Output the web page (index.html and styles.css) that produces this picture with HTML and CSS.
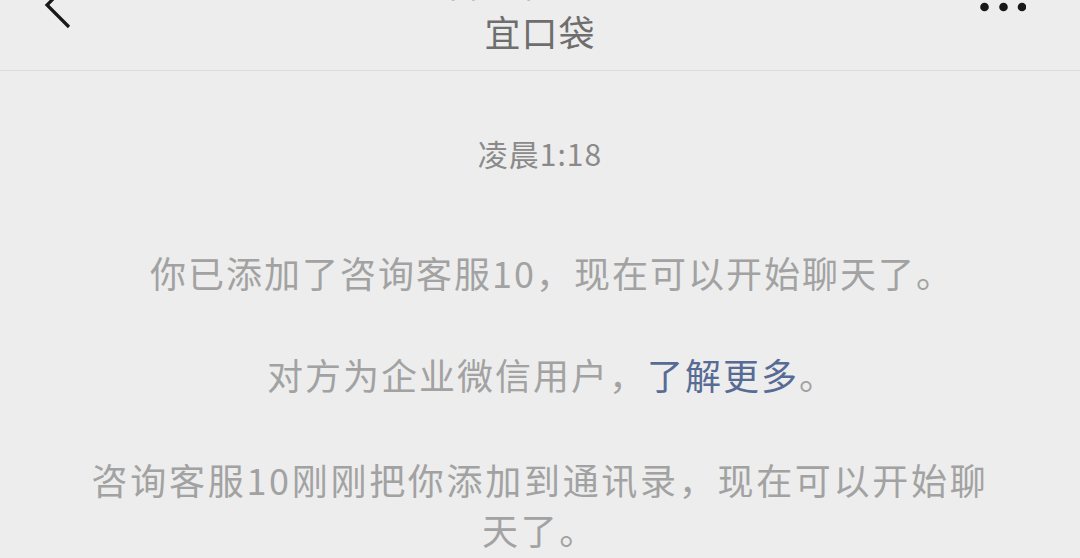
FILE: index.html
```html
<!DOCTYPE html>
<html lang="zh-CN">
<head>
<meta charset="utf-8">
<title>宜口袋</title>
<link rel="stylesheet" href="styles.css">
</head>
<body>
<header class="header">
  <div class="back">
    <svg width="30" height="50" viewBox="0 0 30 50"><path d="M25 2 L3 24 L25 46" fill="none" stroke="#181818" stroke-width="3.2"/></svg>
  </div>
  <div class="titles">
    <div class="title">咨询客服10</div>
    <div class="subtitle">宜口袋</div>
  </div>
  <div class="more">
    <svg width="46" height="10" viewBox="0 0 46 10"><circle cx="4.5" cy="5" r="4.3" fill="#181818"/><circle cx="23.5" cy="5" r="4.3" fill="#181818"/><circle cx="42" cy="5" r="4.3" fill="#181818"/></svg>
  </div>
</header>
<main class="chat">
  <div class="time">凌晨1:18</div>
  <p class="sys sys-first">你已添加了咨询客服10，现在可以开始聊天了。</p>
  <p class="sys sys-second">对方为企业微信用户，<span class="link">了解更多</span>。</p>
  <p class="sys sys-third">咨询客服10刚刚把你添加到通讯录，现在可以开始聊天了。</p>
</main>
</body>
</html>
```
FILE: styles.css
```css
html, body {
  margin: 0;
  padding: 0;
  background: #ededed;
  font-family: "Noto Sans CJK SC", "Noto Sans", sans-serif;
  overflow: hidden;
}
.header {
  height: 71px;
  box-sizing: border-box;
  border-bottom: 1px solid #dcdcdc;
  display: grid;
  grid-template-columns: 1fr auto 1fr;
  overflow: hidden;
}
.back {
  justify-self: start;
  margin-top: -19px;
  margin-left: 44px;
}
.back svg, .more svg { display: block; }
.titles {
  display: flex;
  flex-direction: column;
  align-items: center;
  margin-top: -37px;
}
.title {
  font-size: 36px;
  line-height: 36px;
  color: #3a3a3a;
  letter-spacing: 1px;
}
.subtitle {
  margin-top: 14px;
  font-size: 36px;
  line-height: 36px;
  color: #6e6e6e;
  letter-spacing: 1px;
}
.more {
  justify-self: end;
  margin-top: 2px;
  margin-right: 54px;
}
.chat {
  display: flex;
  flex-direction: column;
  align-items: center;
}
.time {
  margin-top: 62px;
  font-size: 30px;
  line-height: 40px;
  color: #8a8a8a;
  letter-spacing: 1px;
}
.sys {
  margin: 0;
  max-width: 910px;
  text-align: center;
  font-size: 36px;
  line-height: 50px;
  color: #a2a2a2;
  letter-spacing: 2px;
}
.sys-first { margin-top: 74px; padding-left: 24px; }
.sys-second { margin-top: 52px; padding-left: 24px; }
.sys-third { margin-top: 55px; letter-spacing: 2.7px; }
.link { color: #576b95; }
```
